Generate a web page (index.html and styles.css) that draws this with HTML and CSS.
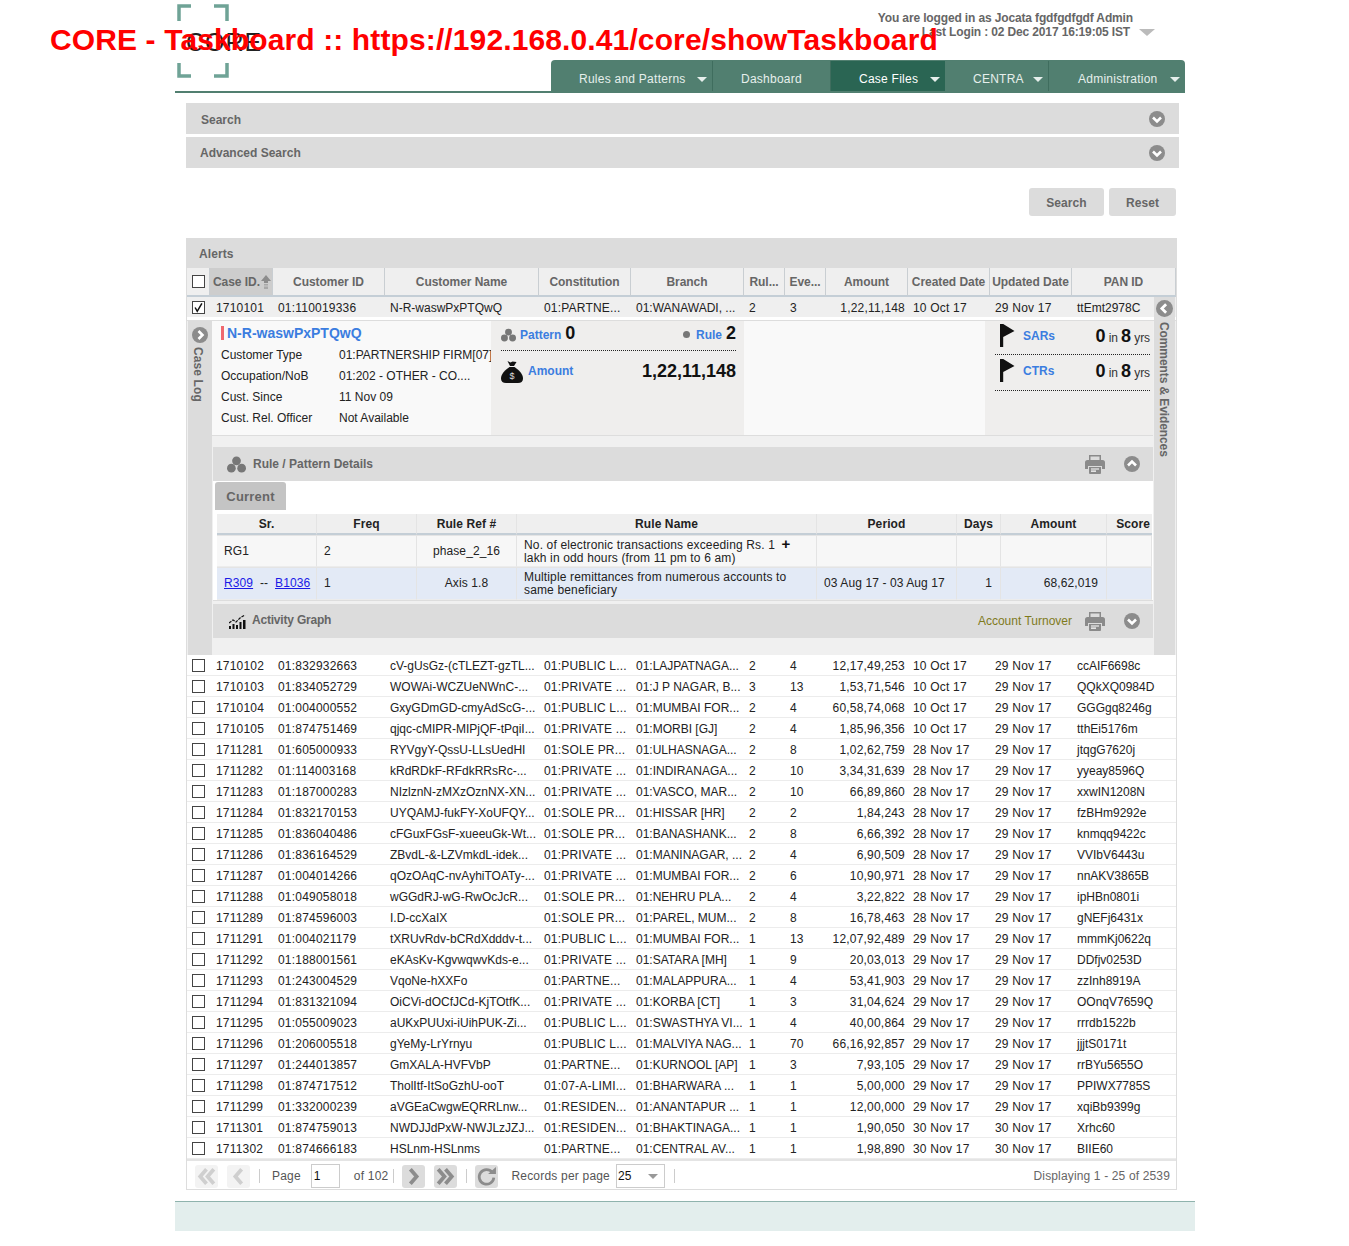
FILE: index.html
```html
<!DOCTYPE html>
<html lang="en">
<head>
    <meta charset="UTF-8">
    <meta name="viewport" content="width=device-width, initial-scale=1.0">
    <title>CORE - Taskboard</title>
    <link rel="stylesheet" href="styles.css">
</head>
<body>
    <svg class="sprite" xmlns="http://www.w3.org/2000/svg">
        <symbol id="chev-down" viewBox="0 0 16 16"><circle cx="8" cy="8" r="8" fill="#8c8c8c"/><path d="M4 6.500l4 4 4-4" fill="none" stroke="#fff" stroke-width="2.600"/></symbol>
        <symbol id="chev-up" viewBox="0 0 16 16"><circle cx="8" cy="8" r="8" fill="#8c8c8c"/><path d="M4 9.500l4-4 4 4" fill="none" stroke="#fff" stroke-width="2.600"/></symbol>
        <symbol id="chev-left" viewBox="0 0 16 16"><circle cx="8" cy="8" r="8" fill="#8c8c8c"/><path d="M9.500 4l-4 4 4 4" fill="none" stroke="#fff" stroke-width="2.600"/></symbol>
        <symbol id="chev-right" viewBox="0 0 16 16"><circle cx="8" cy="8" r="8" fill="#8c8c8c"/><path d="M6.500 4l4 4-4 4" fill="none" stroke="#fff" stroke-width="2.600"/></symbol>
        <symbol id="print" viewBox="0 0 20 19"><path d="M4 0h12v5h-1.500V1.500h-9V5H4z" fill="#8a8a8a"/><path d="M2.500 5h15A2.500 2.500 0 0 1 20 7.500V14h-3v-3H3v3H0V7.500A2.500 2.500 0 0 1 2.500 5z" fill="#8a8a8a"/><path d="M4 12h12v6a1 1 0 0 1-1 1H5a1 1 0 0 1-1-1z" fill="#8a8a8a"/><path d="M6 14h8M6 16.200h5" stroke="#fff" stroke-width="1.200"/></symbol>
        <symbol id="trio" viewBox="0 0 20 17"><circle cx="10" cy="4.600" r="4.600"/><circle cx="4.600" cy="12.400" r="4.600"/><circle cx="15.400" cy="12.400" r="4.600"/></symbol>
        <symbol id="flag" viewBox="0 0 15 23"><path d="M0 0h3.200v23H0zM3.200 0l11.300 7-11.300 6z"/></symbol>
        <symbol id="bag" viewBox="0 0 22 22"><path d="M6.500 0l3 1.500L11.500.5l4 .5-2.500 4H9z"/><path d="M8.500 6h5C18 9 22 13 22 17.500c0 3-2 4.500-5 4.500H5c-3 0-5-1.500-5-4.500C0 13 4 9 8.500 6z"/></symbol>
        <symbol id="chart" viewBox="0 0 17 14"><path d="M0 11h2v3H0zM3.500 9h2v5h-2zM7 10h2v4H7zM10.500 7h2v7h-2zM14 5h2.500v9H14z"/><path d="M0 8l4-3 3 2 4-4 5-3" fill="none" stroke="#111" stroke-width="1.200" stroke-dasharray="3 1"/></symbol>
        <symbol id="sort-up" viewBox="0 0 10 14"><path d="M5 0l5 6H7v2H3V6H0z" fill="#8c8c8c"/><path d="M3 9h4v1.500H3zM3 11.500h4V14H3z" fill="#a8a8a8"/></symbol>
        <symbol id="pg-first" viewBox="0 0 22 22"><path d="M11 4l-6 7 6 7M18 4l-6 7 6 7" fill="none" stroke="currentColor" stroke-width="3.600"/></symbol>
        <symbol id="pg-prev" viewBox="0 0 22 22"><path d="M14 4l-6 7 6 7" fill="none" stroke="currentColor" stroke-width="3.600"/></symbol>
        <symbol id="pg-next" viewBox="0 0 22 22"><path d="M8 4l6 7-6 7" fill="none" stroke="currentColor" stroke-width="3.600"/></symbol>
        <symbol id="pg-last" viewBox="0 0 22 22"><path d="M4 4l6 7-6 7M11 4l6 7-6 7" fill="none" stroke="currentColor" stroke-width="3.600"/></symbol>
        <symbol id="pg-refresh" viewBox="0 0 22 22"><path d="M16.500 7A7 7 0 1 0 18 12" fill="none" stroke="currentColor" stroke-width="2.600"/><path d="M12.500 8.500H20V2z" fill="currentColor"/></symbol>
        <symbol id="tick" viewBox="0 0 13 13"><path d="M2.500 6.500l2.500 4.500L10.500 1.500" fill="none" stroke="#111" stroke-width="1.800"/></symbol>
    </svg>

    <h1 class="page-title">CORE - Taskboard :: https://192.168.0.41/core/showTaskboard</h1>

    <div class="page">
        <header class="top">
            <svg class="logo" viewBox="0 0 84 74" width="84" height="74">
                <path d="M14 2H2v15M37 2h13v15M2 59v13h12M50 59v13H37" fill="none" stroke="#6fa396" stroke-width="3.500"/>
                <text x="9" y="47" class="logo-text">CORE</text>
            </svg>
            <div class="top-right">
                <div class="user-box">
                    <div class="user-text">
                        <div>You are logged in as Jocata fgdfgdfgdf Admin</div>
                        <div class="last-login">Last Login : 02 Dec 2017 16:19:05 IST</div>
                    </div>
                    <span class="user-caret"></span>
                </div>
                <nav class="main-nav">
                    <a class="nav-item nav-rules">Rules and Patterns <i class="caret"></i></a>
                    <a class="nav-item nav-dash">Dashboard</a>
                    <a class="nav-item nav-case active">Case Files <i class="caret"></i></a>
                    <a class="nav-item nav-centra">CENTRA <i class="caret"></i></a>
                    <a class="nav-item nav-admin">Administration <i class="caret"></i></a>
                </nav>
            </div>
        </header>

        <div class="content">
            <div class="accordion first"><span>Search</span><svg class="ico16"><use href="#chev-down"/></svg></div>
            <div class="accordion second"><span>Advanced Search</span><svg class="ico16"><use href="#chev-down"/></svg></div>

            <div class="search-actions">
                <button class="btn btn-search">Search</button>
                <button class="btn btn-reset">Reset</button>
            </div>

            <section class="alerts">
                <div class="alerts-title">Alerts</div>
                <table class="grid">
                    <colgroup>
                        <col class="c-chk"><col class="c-case"><col class="c-cust"><col class="c-name"><col class="c-const"><col class="c-branch"><col class="c-rul"><col class="c-eve"><col class="c-amt"><col class="c-date"><col class="c-date"><col class="c-pan">
                    </colgroup>
                    <thead>
                        <tr>
                            <th class="chk"><span class="cb"></span></th>
                            <th class="sorted">Case ID.<svg class="sort-arrow"><use href="#sort-up"/></svg></th>
                            <th>Customer ID</th><th>Customer Name</th><th>Constitution</th><th>Branch</th>
                            <th>Rul...</th><th>Eve...</th><th>Amount</th><th>Created Date</th><th>Updated Date</th><th>PAN ID</th>
                        </tr>
                    </thead>
                    <tbody>
                        <tr class="selected"><td class="chk"><span class="cb"><svg><use href="#tick"/></svg></span></td><td>1710101</td><td>01:110019336</td><td>N-R-waswPxPTQwQ</td><td>01:PARTNE...</td><td>01:WANAWADI, ...</td><td>2</td><td>3</td><td class="num">1,22,11,148</td><td>10 Oct 17</td><td>29 Nov 17</td><td>ttEmt2978C</td></tr>
                        <tr class="detail-row">
                            <td colspan="12">
                                <div class="detail">
                                    <aside class="case-log">
                                        <svg class="ico16"><use href="#chev-right"/></svg>
                                        <span class="vtext">Case Log</span>
                                    </aside>
                                    <div class="detail-main">
                                        <div class="summary">
                                            <div class="cust">
                                                <h3 class="cust-name">N-R-waswPxPTQwQ</h3>
                                                <dl class="cust-info">
                                                    <dt>Customer Type</dt><dd>01:PARTNERSHIP FIRM[07]</dd>
                                                    <dt>Occupation/NoB</dt><dd>01:202 - OTHER - CO....</dd>
                                                    <dt>Cust. Since</dt><dd>11 Nov 09</dd>
                                                    <dt>Cust. Rel. Officer</dt><dd>Not Available</dd>
                                                </dl>
                                            </div>
                                            <div class="counts">
                                                <div class="counts-top">
                                                    <div class="count-item"><svg class="ico-trio"><use href="#trio"/></svg><a class="blue">Pattern</a> <b class="big">0</b></div>
                                                    <div class="count-item"><span class="dot"></span><a class="blue">Rule</a> <b class="big">2</b></div>
                                                </div>
                                                <div class="counts-amount">
                                                    <svg class="ico-bag"><use href="#bag"/><text x="11" y="18" class="bag-sign">$</text></svg>
                                                    <a class="blue">Amount</a>
                                                    <b class="big amount-value">1,22,11,148</b>
                                                </div>
                                            </div>
                                            <div class="blank"></div>
                                            <div class="reports">
                                                <div class="report-row"><svg class="ico-flag"><use href="#flag"/></svg><a class="blue">SARs</a><span class="report-val"><b class="big">0</b> in <b class="big">8</b> yrs</span></div>
                                                <div class="report-row"><svg class="ico-flag"><use href="#flag"/></svg><a class="blue">CTRs</a><span class="report-val"><b class="big">0</b> in <b class="big">8</b> yrs</span></div>
                                            </div>
                                        </div>

                                        <div class="bar bar-rule">
                                            <svg class="ico-trio-lg"><use href="#trio"/></svg>
                                            <span class="bar-title">Rule / Pattern Details</span>
                                            <svg class="ico-print"><use href="#print"/></svg>
                                            <svg class="ico16"><use href="#chev-up"/></svg>
                                        </div>
                                        <div class="rule-body">
                                            <div class="tab-current">Current</div>
                                            <table class="rules">
                                                <colgroup><col class="r-sr"><col class="r-fr"><col class="r-ref"><col class="r-name"><col class="r-per"><col class="r-days"><col class="r-amt"><col class="r-score"></colgroup>
                                                <thead><tr><th>Sr.</th><th>Freq</th><th>Rule Ref #</th><th>Rule Name</th><th>Period</th><th>Days</th><th>Amount</th><th>Score</th></tr></thead>
                                                <tbody>
                                                    <tr class="group"><td>RG1</td><td>2</td><td class="mid">phase_2_16</td><td class="rule-name">No. of electronic transactions exceeding Rs. 1 <b class="plus">+</b><br>lakh in odd hours (from 11 pm to 6 am)</td><td></td><td></td><td></td><td></td></tr>
                                                    <tr class="hit"><td><a class="link">R309</a> &nbsp;-- &nbsp;<a class="link">B1036</a></td><td>1</td><td class="mid">Axis 1.8</td><td class="rule-name">Multiple remittances from numerous accounts to<br>same beneficiary</td><td>03 Aug 17 - 03 Aug 17</td><td class="right">1</td><td class="right">68,62,019</td><td></td></tr>
                                                </tbody>
                                            </table>
                                        </div>
                                        <div class="bar bar-graph">
                                            <svg class="ico-chart"><use href="#chart"/></svg>
                                            <span class="bar-title">Activity Graph</span>
                                            <a class="turnover">Account Turnover</a>
                                            <svg class="ico-print"><use href="#print"/></svg>
                                            <svg class="ico16"><use href="#chev-down"/></svg>
                                        </div>
                                    </div>
                                    <aside class="comments">
                                        <svg class="ico17"><use href="#chev-left"/></svg>
                                        <span class="vtext">Comments &amp; Evidences</span>
                                    </aside>
                                </div>
                            </td>
                        </tr>
                        <tr><td class="chk"><span class="cb"></span></td><td>1710102</td><td>01:832932663</td><td>cV-gUsGz-(cTLEZT-gzTL...</td><td>01:PUBLIC L...</td><td>01:LAJPATNAGA...</td><td>2</td><td>4</td><td class="num">12,17,49,253</td><td>10 Oct 17</td><td>29 Nov 17</td><td>ccAIF6698c</td></tr>
                        <tr><td class="chk"><span class="cb"></span></td><td>1710103</td><td>01:834052729</td><td>WOWAi-WCZUeNWnC-...</td><td>01:PRIVATE ...</td><td>01:J P NAGAR, B...</td><td>3</td><td>13</td><td class="num">1,53,71,546</td><td>10 Oct 17</td><td>29 Nov 17</td><td>QQkXQ0984D</td></tr>
                        <tr><td class="chk"><span class="cb"></span></td><td>1710104</td><td>01:004000552</td><td>GxyGDmGD-cmyAdScG-...</td><td>01:PUBLIC L...</td><td>01:MUMBAI FOR...</td><td>2</td><td>4</td><td class="num">60,58,74,068</td><td>10 Oct 17</td><td>29 Nov 17</td><td>GGGgq8246g</td></tr>
                        <tr><td class="chk"><span class="cb"></span></td><td>1710105</td><td>01:874751469</td><td>qjqc-cMIPR-MIPjQF-tPqiI...</td><td>01:PRIVATE ...</td><td>01:MORBI [GJ]</td><td>2</td><td>4</td><td class="num">1,85,96,356</td><td>10 Oct 17</td><td>29 Nov 17</td><td>tthEi5176m</td></tr>
                        <tr><td class="chk"><span class="cb"></span></td><td>1711281</td><td>01:605000933</td><td>RYVgyY-QssU-LLsUedHI</td><td>01:SOLE PR...</td><td>01:ULHASNAGA...</td><td>2</td><td>8</td><td class="num">1,02,62,759</td><td>28 Nov 17</td><td>29 Nov 17</td><td>jtqgG7620j</td></tr>
                        <tr><td class="chk"><span class="cb"></span></td><td>1711282</td><td>01:114003168</td><td>kRdRDkF-RFdkRRsRc-...</td><td>01:PRIVATE ...</td><td>01:INDIRANAGA...</td><td>2</td><td>10</td><td class="num">3,34,31,639</td><td>28 Nov 17</td><td>29 Nov 17</td><td>yyeay8596Q</td></tr>
                        <tr><td class="chk"><span class="cb"></span></td><td>1711283</td><td>01:187000283</td><td>NIzlznN-zMXzOznNX-XN...</td><td>01:PRIVATE ...</td><td>01:VASCO, MAR...</td><td>2</td><td>10</td><td class="num">66,89,860</td><td>28 Nov 17</td><td>29 Nov 17</td><td>xxwIN1208N</td></tr>
                        <tr><td class="chk"><span class="cb"></span></td><td>1711284</td><td>01:832170153</td><td>UYQAMJ-fukFY-XoUFQY...</td><td>01:SOLE PR...</td><td>01:HISSAR [HR]</td><td>2</td><td>2</td><td class="num">1,84,243</td><td>28 Nov 17</td><td>29 Nov 17</td><td>fzBHm9292e</td></tr>
                        <tr><td class="chk"><span class="cb"></span></td><td>1711285</td><td>01:836040486</td><td>cFGuxFGsF-xueeuGk-Wt...</td><td>01:SOLE PR...</td><td>01:BANASHANK...</td><td>2</td><td>8</td><td class="num">6,66,392</td><td>28 Nov 17</td><td>29 Nov 17</td><td>knmqq9422c</td></tr>
                        <tr><td class="chk"><span class="cb"></span></td><td>1711286</td><td>01:836164529</td><td>ZBvdL-&amp;-LZVmkdL-idek...</td><td>01:PRIVATE ...</td><td>01:MANINAGAR, ...</td><td>2</td><td>4</td><td class="num">6,90,509</td><td>28 Nov 17</td><td>29 Nov 17</td><td>VVIbV6443u</td></tr>
                        <tr><td class="chk"><span class="cb"></span></td><td>1711287</td><td>01:004014266</td><td>qOzOAqC-nvAyhiTOATy-...</td><td>01:PRIVATE ...</td><td>01:MUMBAI FOR...</td><td>2</td><td>6</td><td class="num">10,90,971</td><td>28 Nov 17</td><td>29 Nov 17</td><td>nnAKV3865B</td></tr>
                        <tr><td class="chk"><span class="cb"></span></td><td>1711288</td><td>01:049058018</td><td>wGGdRJ-wG-RwOcJcR...</td><td>01:SOLE PR...</td><td>01:NEHRU PLA...</td><td>2</td><td>4</td><td class="num">3,22,822</td><td>28 Nov 17</td><td>29 Nov 17</td><td>ipHBn0801i</td></tr>
                        <tr><td class="chk"><span class="cb"></span></td><td>1711289</td><td>01:874596003</td><td>I.D-ccXaIX</td><td>01:SOLE PR...</td><td>01:PAREL, MUM...</td><td>2</td><td>8</td><td class="num">16,78,463</td><td>28 Nov 17</td><td>29 Nov 17</td><td>gNEFj6431x</td></tr>
                        <tr><td class="chk"><span class="cb"></span></td><td>1711291</td><td>01:004021179</td><td>tXRUvRdv-bCRdXdddv-t...</td><td>01:PUBLIC L...</td><td>01:MUMBAI FOR...</td><td>1</td><td>13</td><td class="num">12,07,92,489</td><td>29 Nov 17</td><td>29 Nov 17</td><td>mmmKj0622q</td></tr>
                        <tr><td class="chk"><span class="cb"></span></td><td>1711292</td><td>01:188001561</td><td>eKAsKv-KgvwqwvKds-e...</td><td>01:PRIVATE ...</td><td>01:SATARA [MH]</td><td>1</td><td>9</td><td class="num">20,03,013</td><td>29 Nov 17</td><td>29 Nov 17</td><td>DDfjv0253D</td></tr>
                        <tr><td class="chk"><span class="cb"></span></td><td>1711293</td><td>01:243004529</td><td>VqoNe-hXXFo</td><td>01:PARTNE...</td><td>01:MALAPPURA...</td><td>1</td><td>4</td><td class="num">53,41,903</td><td>29 Nov 17</td><td>29 Nov 17</td><td>zzInh8919A</td></tr>
                        <tr><td class="chk"><span class="cb"></span></td><td>1711294</td><td>01:831321094</td><td>OiCVi-dOCfJCd-KjTOtfK...</td><td>01:PRIVATE ...</td><td>01:KORBA [CT]</td><td>1</td><td>3</td><td class="num">31,04,624</td><td>29 Nov 17</td><td>29 Nov 17</td><td>OOnqV7659Q</td></tr>
                        <tr><td class="chk"><span class="cb"></span></td><td>1711295</td><td>01:055009023</td><td>aUKxPUUxi-iUihPUK-Zi...</td><td>01:PUBLIC L...</td><td>01:SWASTHYA VI...</td><td>1</td><td>4</td><td class="num">40,00,864</td><td>29 Nov 17</td><td>29 Nov 17</td><td>rrrdb1522b</td></tr>
                        <tr><td class="chk"><span class="cb"></span></td><td>1711296</td><td>01:206005518</td><td>gYeMy-LrYrnyu</td><td>01:PUBLIC L...</td><td>01:MALVIYA NAG...</td><td>1</td><td>70</td><td class="num">66,16,92,857</td><td>29 Nov 17</td><td>29 Nov 17</td><td>jjjtS0171t</td></tr>
                        <tr><td class="chk"><span class="cb"></span></td><td>1711297</td><td>01:244013857</td><td>GmXALA-HVFVbP</td><td>01:PARTNE...</td><td>01:KURNOOL [AP]</td><td>1</td><td>3</td><td class="num">7,93,105</td><td>29 Nov 17</td><td>29 Nov 17</td><td>rrBYu5655O</td></tr>
                        <tr><td class="chk"><span class="cb"></span></td><td>1711298</td><td>01:874717512</td><td>TholItf-ItSoGzhU-ooT</td><td>01:07-A-LIMI...</td><td>01:BHARWARA ...</td><td>1</td><td>1</td><td class="num">5,00,000</td><td>29 Nov 17</td><td>29 Nov 17</td><td>PPIWX7785S</td></tr>
                        <tr><td class="chk"><span class="cb"></span></td><td>1711299</td><td>01:332000239</td><td>aVGEaCwgwEQRRLnw...</td><td>01:RESIDEN...</td><td>01:ANANTAPUR ...</td><td>1</td><td>1</td><td class="num">12,00,000</td><td>29 Nov 17</td><td>29 Nov 17</td><td>xqiBb9399g</td></tr>
                        <tr><td class="chk"><span class="cb"></span></td><td>1711301</td><td>01:874759013</td><td>NWDJJdPxW-NWJLzJZJ...</td><td>01:RESIDEN...</td><td>01:BHAKTINAGA...</td><td>1</td><td>1</td><td class="num">1,90,050</td><td>30 Nov 17</td><td>30 Nov 17</td><td>Xrhc60</td></tr>
                        <tr><td class="chk"><span class="cb"></span></td><td>1711302</td><td>01:874666183</td><td>HSLnm-HSLnms</td><td>01:PARTNE...</td><td>01:CENTRAL AV...</td><td>1</td><td>1</td><td class="num">1,98,890</td><td>30 Nov 17</td><td>30 Nov 17</td><td>BIIE60</td></tr>
                    </tbody>
                </table>
                <div class="pager">
                    <span class="pg-btn off"><svg><use href="#pg-first"/></svg></span>
                    <span class="pg-btn off"><svg><use href="#pg-prev"/></svg></span>
                    <i class="pg-sep"></i>
                    <span class="pg-label">Page</span>
                    <span class="pg-input">1</span>
                    <span class="pg-of">of 102</span>
                    <i class="pg-sep"></i>
                    <span class="pg-btn"><svg><use href="#pg-next"/></svg></span>
                    <span class="pg-btn"><svg><use href="#pg-last"/></svg></span>
                    <i class="pg-sep"></i>
                    <span class="pg-btn"><svg><use href="#pg-refresh"/></svg></span>
                    <span class="pg-label pg-records">Records per page</span>
                    <span class="pg-select">25<i class="pg-select-caret"></i></span>
                    <i class="pg-sep"></i>
                    <span class="pg-display">Displaying 1 - 25 of 2539</span>
                </div>
            </section>
        </div>

        <footer class="foot"></footer>
    </div>
</body>
</html>
```

FILE: styles.css
```css
body {
    font-family: "Liberation Sans", Arial, sans-serif;
    font-size: 12px;
    color: #222;
    background-color: #fff;
    margin: 0;
    letter-spacing: 0.2px;
}
.sprite {
    display: none;
}
.page-title {
    position: absolute;
    left: 50px;
    top: 21px;
    margin: 0;
    font-size: 30px;
    line-height: 37px;
    font-weight: bold;
    color: #f00;
    letter-spacing: 0.12px;
    white-space: nowrap;
    z-index: 5;
}
.page {
    width: 1020px;
    margin-left: 175px;
    padding-bottom: 15px;
}

/* header */
.top {
    display: flex;
    justify-content: space-between;
    width: 1010px;
    height: 93px;
    box-sizing: border-box;
    border-bottom: 2px solid #517f70;
}
.logo {
    margin: 4px 0 0 2px;
}
.logo-text {
    font-size: 25px;
    fill: #222;
    letter-spacing: 1px;
}
.top-right {
    display: flex;
    flex-direction: column;
    width: 634px;
}
.user-box {
    display: flex;
    justify-content: flex-end;
    align-items: flex-start;
    padding: 11px 30px 0 0;
    height: 60px;
    box-sizing: border-box;
    font-weight: bold;
    color: #666;
    letter-spacing: -0.14px;
}
.user-text {
    text-align: right;
    line-height: 14px;
}
.last-login {
    padding-right: 3px;
}
.user-caret {
    border-left: 8px solid transparent;
    border-right: 8px solid transparent;
    border-top: 7px solid #bbb;
    margin: 18px 0 0 6px;
}
.main-nav {
    display: flex;
    height: 31px;
    background: #517f70;
    border-radius: 4px 4px 0 0;
    box-sizing: border-box;
    padding-top: 1px;
}
.nav-item {
    display: flex;
    align-items: center;
    justify-content: space-between;
    box-sizing: border-box;
    padding: 6px 5px 0 28px;
    color: #e6efec;
    letter-spacing: 0.25px;
    border-right: 1px solid #3f6d5e;
}
.nav-rules { width: 162px; }
.nav-dash { width: 118px; }
.nav-case { width: 114px; }
.nav-centra { width: 104px; }
.nav-admin {
    width: 136px;
    padding-left: 29px;
    border-right: none;
}
.nav-item.active {
    background: #2a6553;
    color: #fff;
    border-right: none;
}
.caret {
    border-left: 5px solid transparent;
    border-right: 5px solid transparent;
    border-top: 5px solid #e6efec;
}

/* search */
.content {
    margin-left: 11px;
    width: 993px;
}
.accordion {
    display: flex;
    align-items: center;
    justify-content: space-between;
    height: 31px;
    background: #dcdcdc;
    font-weight: bold;
    color: #666;
    padding: 0 14px 0 15px;
    letter-spacing: 0;
}
.accordion.first {
    margin-top: 10px;
}
.accordion.first span {
    margin-top: 2px;
}
.accordion.second {
    margin-top: 3px;
    padding-left: 14px;
}
.ico16 {
    width: 16px;
    height: 16px;
    flex: none;
}
.ico17 {
    width: 17px;
    height: 17px;
    flex: none;
}
.search-actions {
    display: flex;
    justify-content: flex-end;
    gap: 5px;
    padding: 20px 3px 22px 0;
}
.btn {
    height: 28px;
    border: none;
    border-radius: 3px;
    background: #dcdcdc;
    color: #666;
    font: bold 12px "Liberation Sans", Arial, sans-serif;
    letter-spacing: 0.1px;
    padding: 2px 0 0;
}
.btn-search { width: 75px; }
.btn-reset { width: 67px; }

/* alerts grid */
.alerts {
    width: 991px;
    box-sizing: border-box;
    border: 1px solid #ddd;
    border-width: 0 1px 1px 1px;
}
.alerts-title {
    height: 30px;
    line-height: 33px;
    margin: 0 -1px;
    padding-left: 13px;
    background: #dcdcdc;
    font-weight: bold;
    color: #666;
    letter-spacing: 0.1px;
}
.grid {
    width: 989px;
    table-layout: fixed;
    border-collapse: separate;
    border-spacing: 0;
}
.c-chk { width: 23px; }
.c-case { width: 63px; }
.c-cust { width: 112px; }
.c-name { width: 154px; }
.c-const { width: 92px; }
.c-branch { width: 113px; }
.c-rul { width: 41px; }
.c-eve { width: 41px; }
.c-amt { width: 82px; }
.c-date { width: 82px; }
.c-pan { width: 104px; }
.grid th {
    height: 29px;
    box-sizing: border-box;
    padding: 0 2px;
    background: #efefef;
    border-bottom: 2px solid #c4ced6;
    border-right: 1px solid #c9ced2;
    font-weight: bold;
    color: #666;
    white-space: nowrap;
    overflow: hidden;
    letter-spacing: -0.05px;
}
.grid th.sorted {
    background: #cdcdcd;
    text-align: left;
    padding-left: 3px;
}
.sort-arrow {
    width: 10px;
    height: 14px;
    margin-left: 1px;
    vertical-align: -3px;
}
.grid td {
    height: 21px;
    box-sizing: border-box;
    padding: 2px 5px 0;
    border-bottom: 1px solid #ececec;
    white-space: nowrap;
    overflow: hidden;
    line-height: 18px;
}
.grid > tbody > tr > td:nth-child(2) {
    padding-left: 6px;
}
.grid > tbody > tr > td:nth-child(4),
.grid > tbody > tr > td:nth-child(6),
.grid > tbody > tr > td:nth-child(12) {
    letter-spacing: 0;
}
.grid td.num {
    text-align: right;
    padding-right: 3px;
}
.grid th.chk {
    padding: 0 0 0 5px;
    text-align: left;
}
.grid td.chk {
    padding: 1px 0 0 5px;
    text-align: left;
}
.cb {
    display: block;
    width: 13px;
    height: 13px;
    box-sizing: border-box;
    border: 1px solid #444;
    background: #fff;
}
.cb svg {
    display: block;
    width: 11px;
    height: 11px;
}
.selected td {
    background: #efefef;
    border-bottom-color: #fff;
}

/* expanded row */
.detail-row > td {
    position: relative;
}
.grid .detail-row > td {
    height: auto;
    padding: 0;
    border-bottom: none;
    overflow: visible;
    line-height: normal;
    white-space: normal;
}
.detail {
    display: flex;
    height: 334px;
    margin-top: 2px;
    border-top: 1px solid #ddd;
    background: #f0f0f0;
}
.case-log {
    display: flex;
    flex-direction: column;
    align-items: center;
    width: 24px;
    margin-left: 1px;
    padding-top: 6px;
    box-sizing: border-box;
    background: #dcdcdc;
    flex: none;
}
.vtext {
    writing-mode: vertical-rl;
    font-weight: bold;
    color: #666;
    letter-spacing: 0.1px;
    white-space: nowrap;
}
.case-log .vtext {
    margin: 4px 5px 0 0;
}
.detail-main {
    width: 941px;
    flex: none;
}
.comments {
    position: absolute;
    right: 1px;
    top: -21px;
    bottom: 0;
    width: 21px;
    padding-top: 3px;
    box-sizing: border-box;
    background: #dcdcdc;
    display: flex;
    flex-direction: column;
    align-items: center;
}
.comments .vtext {
    margin: 5px 2px 0 0;
    letter-spacing: -0.1px;
}
.summary {
    display: flex;
    height: 115px;
    box-sizing: border-box;
    background: #f9f9f9;
    border-bottom: 1px solid #ddd;
    margin-bottom: 11px;
}
.cust {
    width: 279px;
    box-sizing: border-box;
    padding: 5px 0 0 9px;
    flex: none;
    color: #222;
    letter-spacing: 0;
}
.cust-name {
    margin: 0 0 4px;
    padding-left: 3px;
    border-left: 3px solid #f0686e;
    font-size: 14px;
    line-height: 14px;
    font-weight: bold;
    color: #3b7de0;
    letter-spacing: 0;
}
.cust-info {
    display: grid;
    grid-template-columns: 118px 1fr;
    grid-auto-rows: 21px;
    align-items: center;
    margin: 0;
}
.cust-info dd {
    margin: 0;
    white-space: nowrap;
}
.counts {
    width: 253px;
    flex: none;
    box-sizing: border-box;
    padding: 0 8px 0 10px;
    background: #efeeed;
}
.counts-top {
    display: flex;
    justify-content: space-between;
    align-items: center;
    height: 30px;
    box-sizing: border-box;
    padding-bottom: 5px;
    border-bottom: 1px dotted #222;
}
.count-item {
    display: flex;
    align-items: center;
    gap: 4px;
}
.ico-trio {
    width: 15px;
    height: 14px;
    fill: #777;
    margin-top: 3px;
}
.dot {
    width: 7px;
    height: 7px;
    border-radius: 50%;
    background: #777;
    margin: 3px 2px 0 0;
}
.blue {
    color: #3b7de0;
    font-weight: bold;
    letter-spacing: 0;
}
.big {
    font-size: 18px;
    line-height: 20px;
    font-weight: bold;
    color: #111;
    letter-spacing: 0;
}
.count-item .blue {
    margin-top: 3px;
}
.counts-amount {
    display: flex;
    align-items: center;
    margin-top: 10px;
    height: 22px;
}
.ico-bag {
    width: 22px;
    height: 22px;
    margin-right: 5px;
    fill: #111;
}
.bag-sign {
    font-size: 9px;
    fill: #ddd;
    text-anchor: middle;
}
.counts-amount .blue {
    margin-top: -2px;
}
.amount-value {
    margin: -2px 0 0 auto;
}
.blank {
    flex: 1;
}
.reports {
    width: 168px;
    flex: none;
    box-sizing: border-box;
    padding: 0 3px 0 10px;
    background: #efeeed;
}
.report-row {
    display: flex;
    align-items: center;
    height: 36px;
    box-sizing: border-box;
    padding-bottom: 4px;
    border-bottom: 1px dotted #222;
}
.report-row:first-child {
    height: 34px;
}
.ico-flag {
    width: 15px;
    height: 23px;
    fill: #111;
    margin: 0 8px 0 5px;
}
.report-val {
    margin-left: auto;
    color: #333;
    letter-spacing: -0.1px;
}
.bar {
    display: flex;
    align-items: center;
    height: 34px;
    background: #dcdcdc;
    margin-left: 1px;
    padding-right: 13px;
}
.bar-title {
    font-weight: bold;
    color: #666;
    letter-spacing: 0;
}
.ico-trio-lg {
    width: 19px;
    height: 17px;
    fill: #777;
    margin: 0 7px 0 14px;
}
.ico-chart {
    width: 17px;
    height: 14px;
    fill: #111;
    margin: 1px 6px 0 16px;
}
.bar-graph .bar-title {
    margin-top: -2px;
    letter-spacing: -0.2px;
}
.ico-print {
    width: 20px;
    height: 19px;
    margin: 0 19px 0 auto;
}
.bar-rule .bar-title {
    margin-right: auto;
}
.bar-graph .ico-print {
    margin-left: 13px;
}
.turnover {
    margin-left: auto;
    color: #7f7a1c;
    letter-spacing: 0;
}
.rule-body {
    background: #fff;
    margin-left: 1px;
    height: 120px;
    box-sizing: border-box;
    padding: 1px 1px 0 2px;
    border-bottom: 1px solid #ddd;
    margin-bottom: 3px;
}
.tab-current {
    width: 71px;
    height: 28px;
    line-height: 29px;
    text-align: center;
    background: #c4c4c4;
    border-radius: 3px 3px 0 0;
    font-size: 13px;
    font-weight: bold;
    color: #666;
}
.rules {
    width: 935px;
    margin: 4px 0 0 2px;
    table-layout: fixed;
    border-collapse: separate;
    border-spacing: 0;
}
.r-sr { width: 100px; }
.r-fr { width: 100px; }
.r-ref { width: 100px; }
.r-name { width: 300px; }
.r-per { width: 140px; }
.r-days { width: 44px; }
.r-amt { width: 106px; }
.r-score { width: 45px; }
.rules th {
    height: 21px;
    padding: 0;
    background: #efefef;
    border-right: 1px solid #e4e4e4;
    color: #222;
    font-weight: bold;
    letter-spacing: 0.1px;
}
.rules th:last-child {
    text-align: right;
    padding-right: 2px;
    border-right: none;
}
.rules td {
    height: 32px;
    box-sizing: border-box;
    padding: 0 7px;
    border-right: 1px solid #e4e4e4;
    border-top: 1px solid #e4e4e4;
    line-height: 13px;
    white-space: nowrap;
    letter-spacing: 0.1px;
}
.hit td { height: 33px; }
.group td { background: #f7f7f7; }
.hit td { background: #e3eaf6; }
.rules td.mid { text-align: center; }
.rules td.right {
    text-align: right;
    padding-right: 8px;
}
.rules td.rule-name {
    white-space: nowrap;
    letter-spacing: 0.15px;
}
.plus {
    font-size: 15px;
    line-height: 12px;
    margin-left: 3px;
    color: #111;
}
.link {
    color: #1a1ae6;
    text-decoration: underline;
}

/* pager */
.pager {
    display: flex;
    align-items: center;
    height: 30px;
    box-sizing: border-box;
    border-top: 2px solid #e4e4e4;
    padding: 2px 6px 0 8px;
    color: #555;
    letter-spacing: 0.2px;
}
.pg-btn {
    width: 23px;
    height: 23px;
    margin-right: 9px;
    border-radius: 3px;
    background: #dcdcdc;
    color: #8c8c8c;
    flex: none;
}
.pg-btn.off {
    background: #f3f3f3;
    color: #cfcfcf;
}
.pg-btn svg {
    display: block;
    width: 23px;
    height: 23px;
}
.pg-sep {
    width: 1px;
    height: 14px;
    background: #ccc;
    margin-right: 8px;
    flex: none;
}
.pg-label {
    margin: 0 10px 0 4px;
}
.pg-input {
    width: 29px;
    height: 24px;
    line-height: 23px;
    box-sizing: border-box;
    border: 1px solid #ccc;
    padding-left: 2px;
    color: #111;
}
.pg-of {
    margin: 0 5px 0 14px;
}
.pg-records {
    margin: 0 6px 0 4px;
}
.pg-select {
    display: flex;
    align-items: center;
    justify-content: space-between;
    width: 49px;
    height: 24px;
    box-sizing: border-box;
    border: 1px solid #ccc;
    padding: 0 6px 0 1px;
    margin-right: 9px;
    color: #111;
}
.pg-select-caret {
    border-left: 5px solid transparent;
    border-right: 5px solid transparent;
    border-top: 5px solid #999;
}
.pg-display {
    margin-left: auto;
    color: #666;
    letter-spacing: 0.15px;
}

/* footer */
.foot {
    height: 30px;
    margin-top: 11px;
    box-sizing: border-box;
    border-top: 1px solid #8fb3ad;
    background: #e3eeed;
}
```
